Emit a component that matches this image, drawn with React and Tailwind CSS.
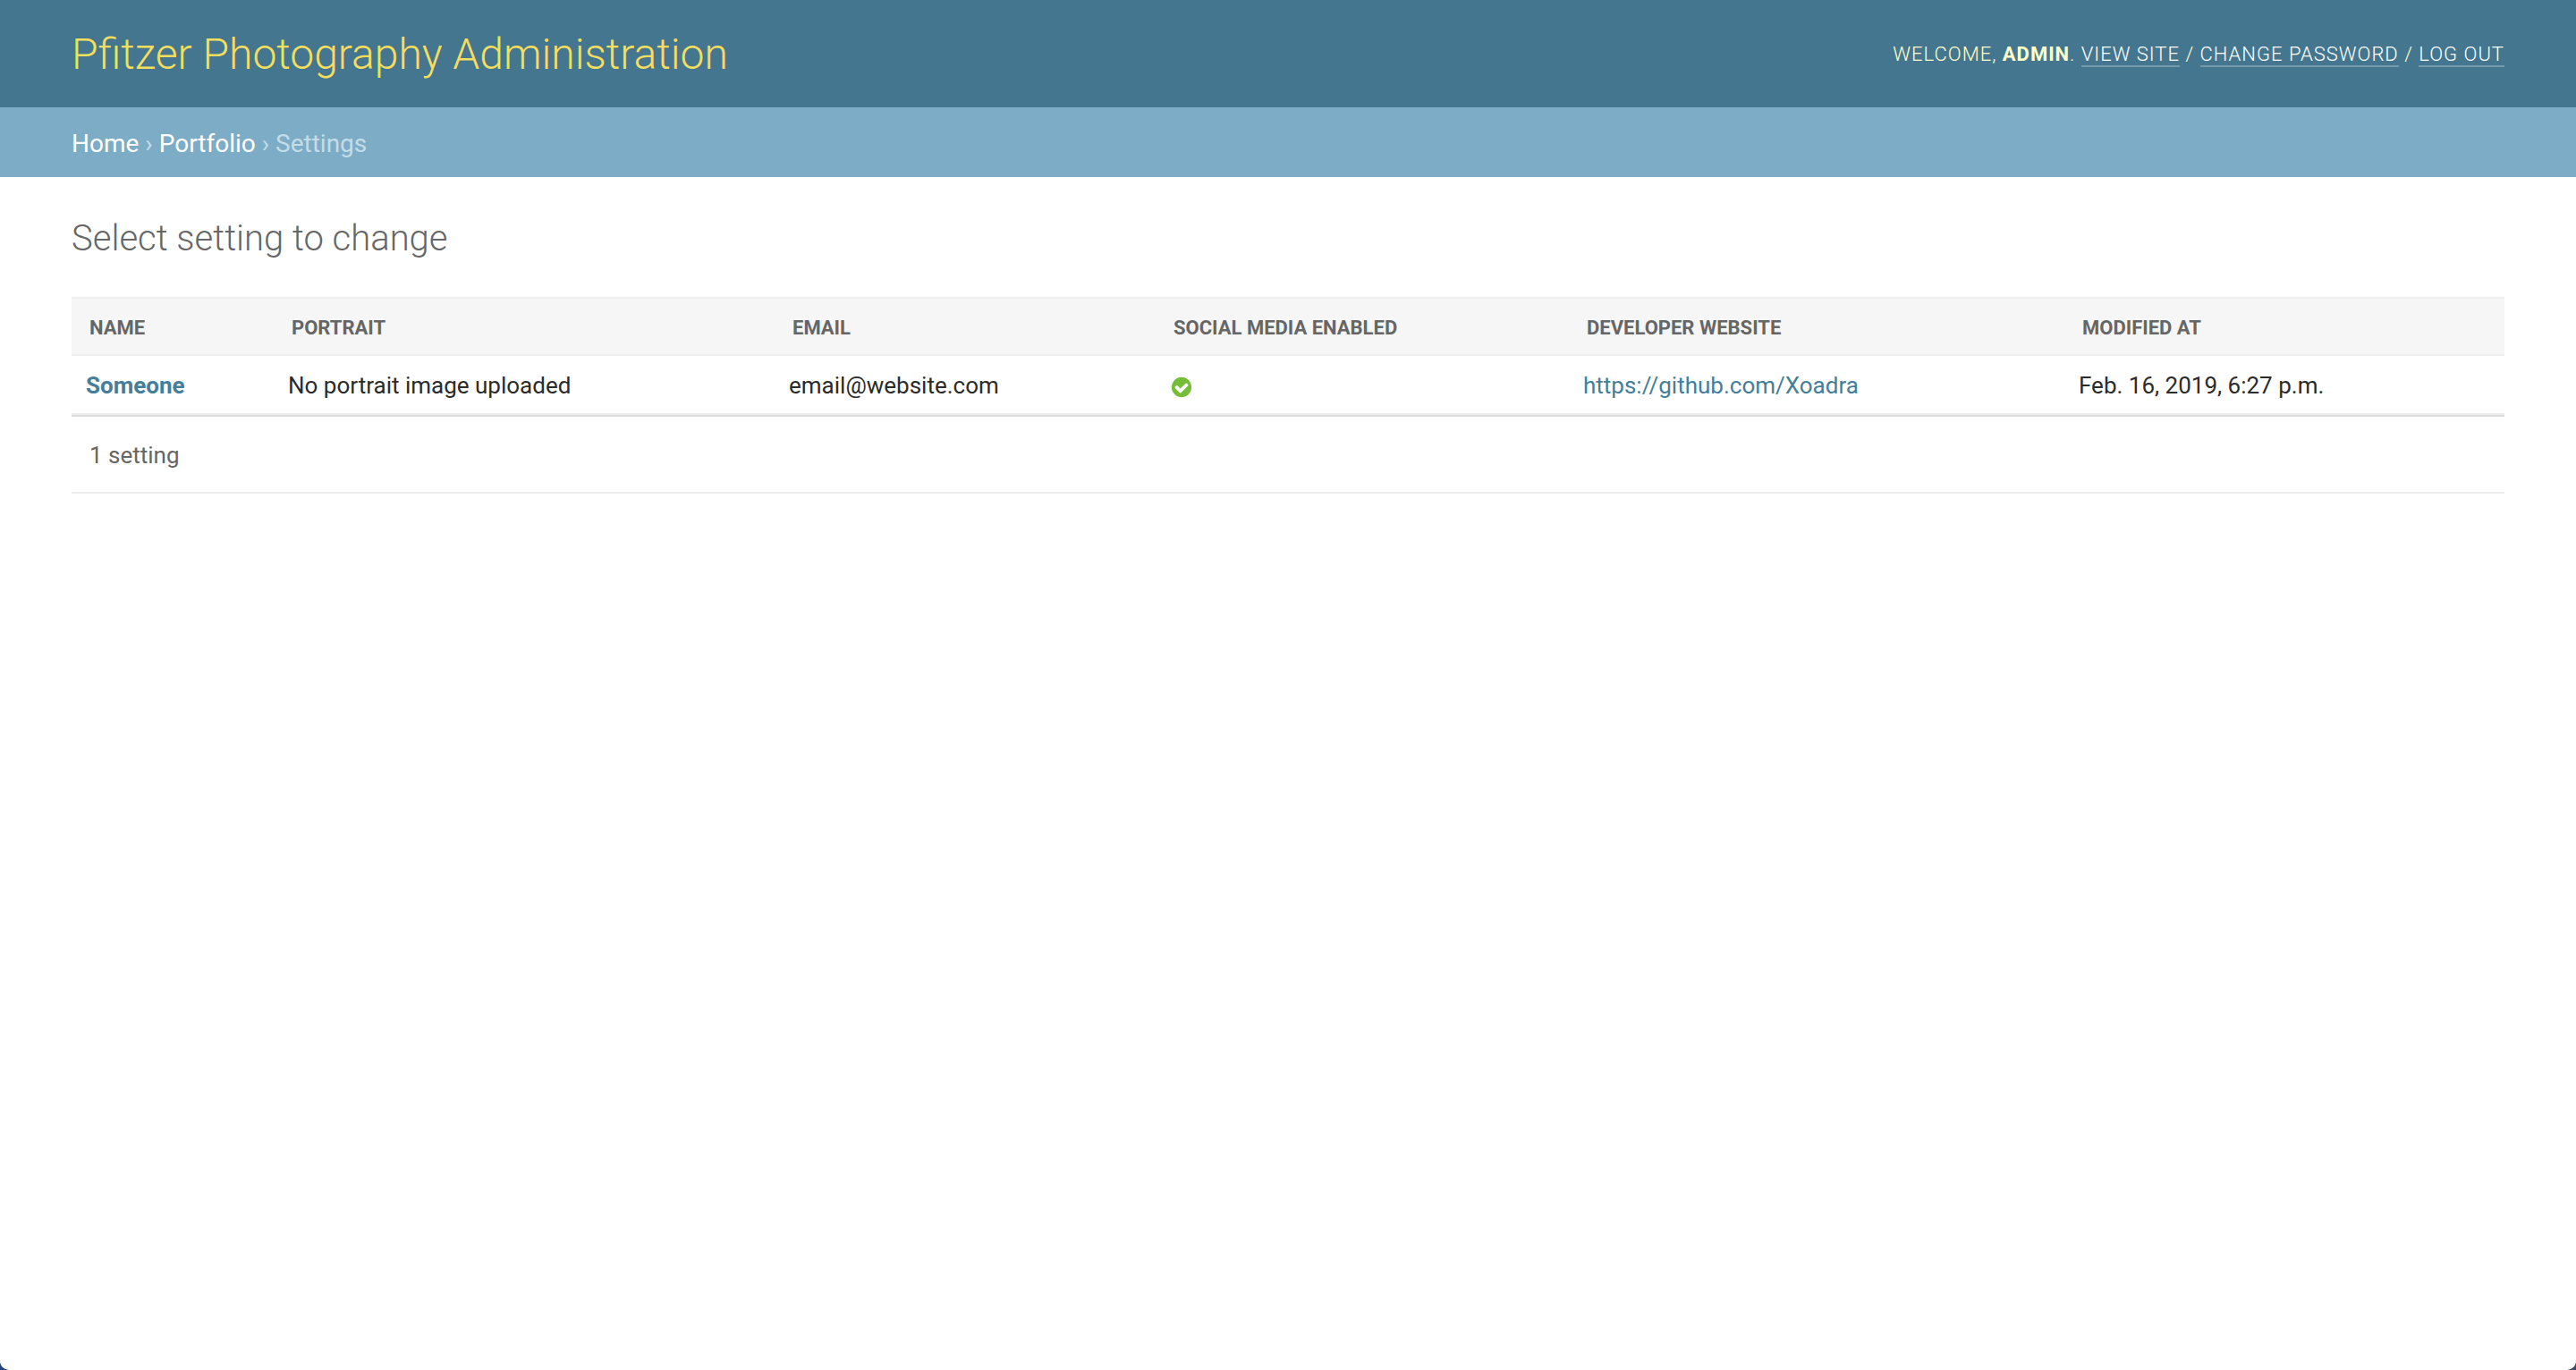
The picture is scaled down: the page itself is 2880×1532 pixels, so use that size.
const columns = [
  { label: 'Name', width: 'w-[226px]' },
  { label: 'Portrait', width: 'w-[560px]' },
  { label: 'Email', width: 'w-[426px]' },
  { label: 'Social media enabled', width: 'w-[462px]' },
  { label: 'Developer website', width: 'w-[554px]' },
  { label: 'Modified at', width: '' },
];

function YesIcon() {
  return (
    <svg role="img" aria-label="True" viewBox="0 0 1792 1792" className="mt-1 size-[26px]" fill="#74be38">
      <path d="M1412 734q0-28-18-46l-91-90q-19-19-45-19t-45 19l-408 407-226-226q-19-19-45-19t-45 19l-91 90q-18 18-18 46 0 27 18 45l362 362q19 19 45 19 27 0 46-19l543-543q18-18 18-45zm252 162q0 209-103 385.500t-279.500 279.500-385.500 103-385.500-103-279.500-279.500-103-385.500 103-385.500 279.500-279.500 385.500-103 385.500 103 279.500 279.500 103 385.500z" />
    </svg>
  );
}

function UserLink({ children }) {
  return <a href="#" className="border-b-2 border-white/25 text-white">{children}</a>;
}

export default function App() {
  return (
    <div className="bg-linear-to-r from-[#1f4480] to-[#3a4a6b]">
      <div className="min-h-screen rounded-b-[10px] bg-white font-['Roboto',sans-serif] text-[26px] text-[#2b2b2b]">
        <header className="flex h-[120px] items-center justify-between bg-[#44778f] px-20 text-[#ffc]">
          <h1 className="pt-0.5 text-[48px] font-light leading-[60px] text-[#f5dd5d]">
            <a href="#">Pfitzer Photography Administration</a>
          </h1>
          <div className="text-[22px] font-light uppercase tracking-[1px]">
            Welcome, <strong className="font-bold">admin</strong>. <UserLink>View site</UserLink> /{' '}
            <UserLink>Change password</UserLink> / <UserLink>Log out</UserLink>
          </div>
        </header>
        <nav aria-label="Breadcrumbs" className="h-[78px] bg-[#7cacc6] px-20 pt-0.5 text-[28px] leading-[78px] text-[#c4dce8]">
          <a href="#" className="text-white">Home</a> › <a href="#" className="text-white">Portfolio</a> › Settings
        </nav>
        <main className="px-20 pt-[42px]">
          <h2 className="mb-[38px] text-[40px] font-light leading-[54px] text-[#666]">Select setting to change</h2>
          <table className="w-full table-fixed border-separate border-spacing-0 text-left">
            <thead>
              <tr className="h-[66px] bg-[#f6f6f6] text-[22px] uppercase text-[#666]">
                {columns.map((c) => (
                  <th key={c.label} scope="col" className={`${c.width} border-y-2 border-[#eee] px-5 pt-0.5 font-bold`}>{c.label}</th>
                ))}
              </tr>
            </thead>
            <tbody>
              <tr className="h-[66px] *:border-b-2 *:border-[#eee] *:px-4 *:pt-0.5">
                <th scope="row" className="font-bold"><a href="#" className="text-[#447e9b]">Someone</a></th>
                <td>No portrait image uploaded</td>
                <td>email@website.com</td>
                <td><YesIcon /></td>
                <td><a href="#" className="text-[#447e9b]">https://github.com/Xoadra</a></td>
                <td>Feb. 16, 2019, 6:27 p.m.</td>
              </tr>
            </tbody>
          </table>
          <p className="flex h-[88px] items-center border-t-2 border-b-2 border-t-[#ddd] border-b-[#eee] px-5 pt-0.5 text-[#666]">1 setting</p>
        </main>
      </div>
    </div>
  );
}
